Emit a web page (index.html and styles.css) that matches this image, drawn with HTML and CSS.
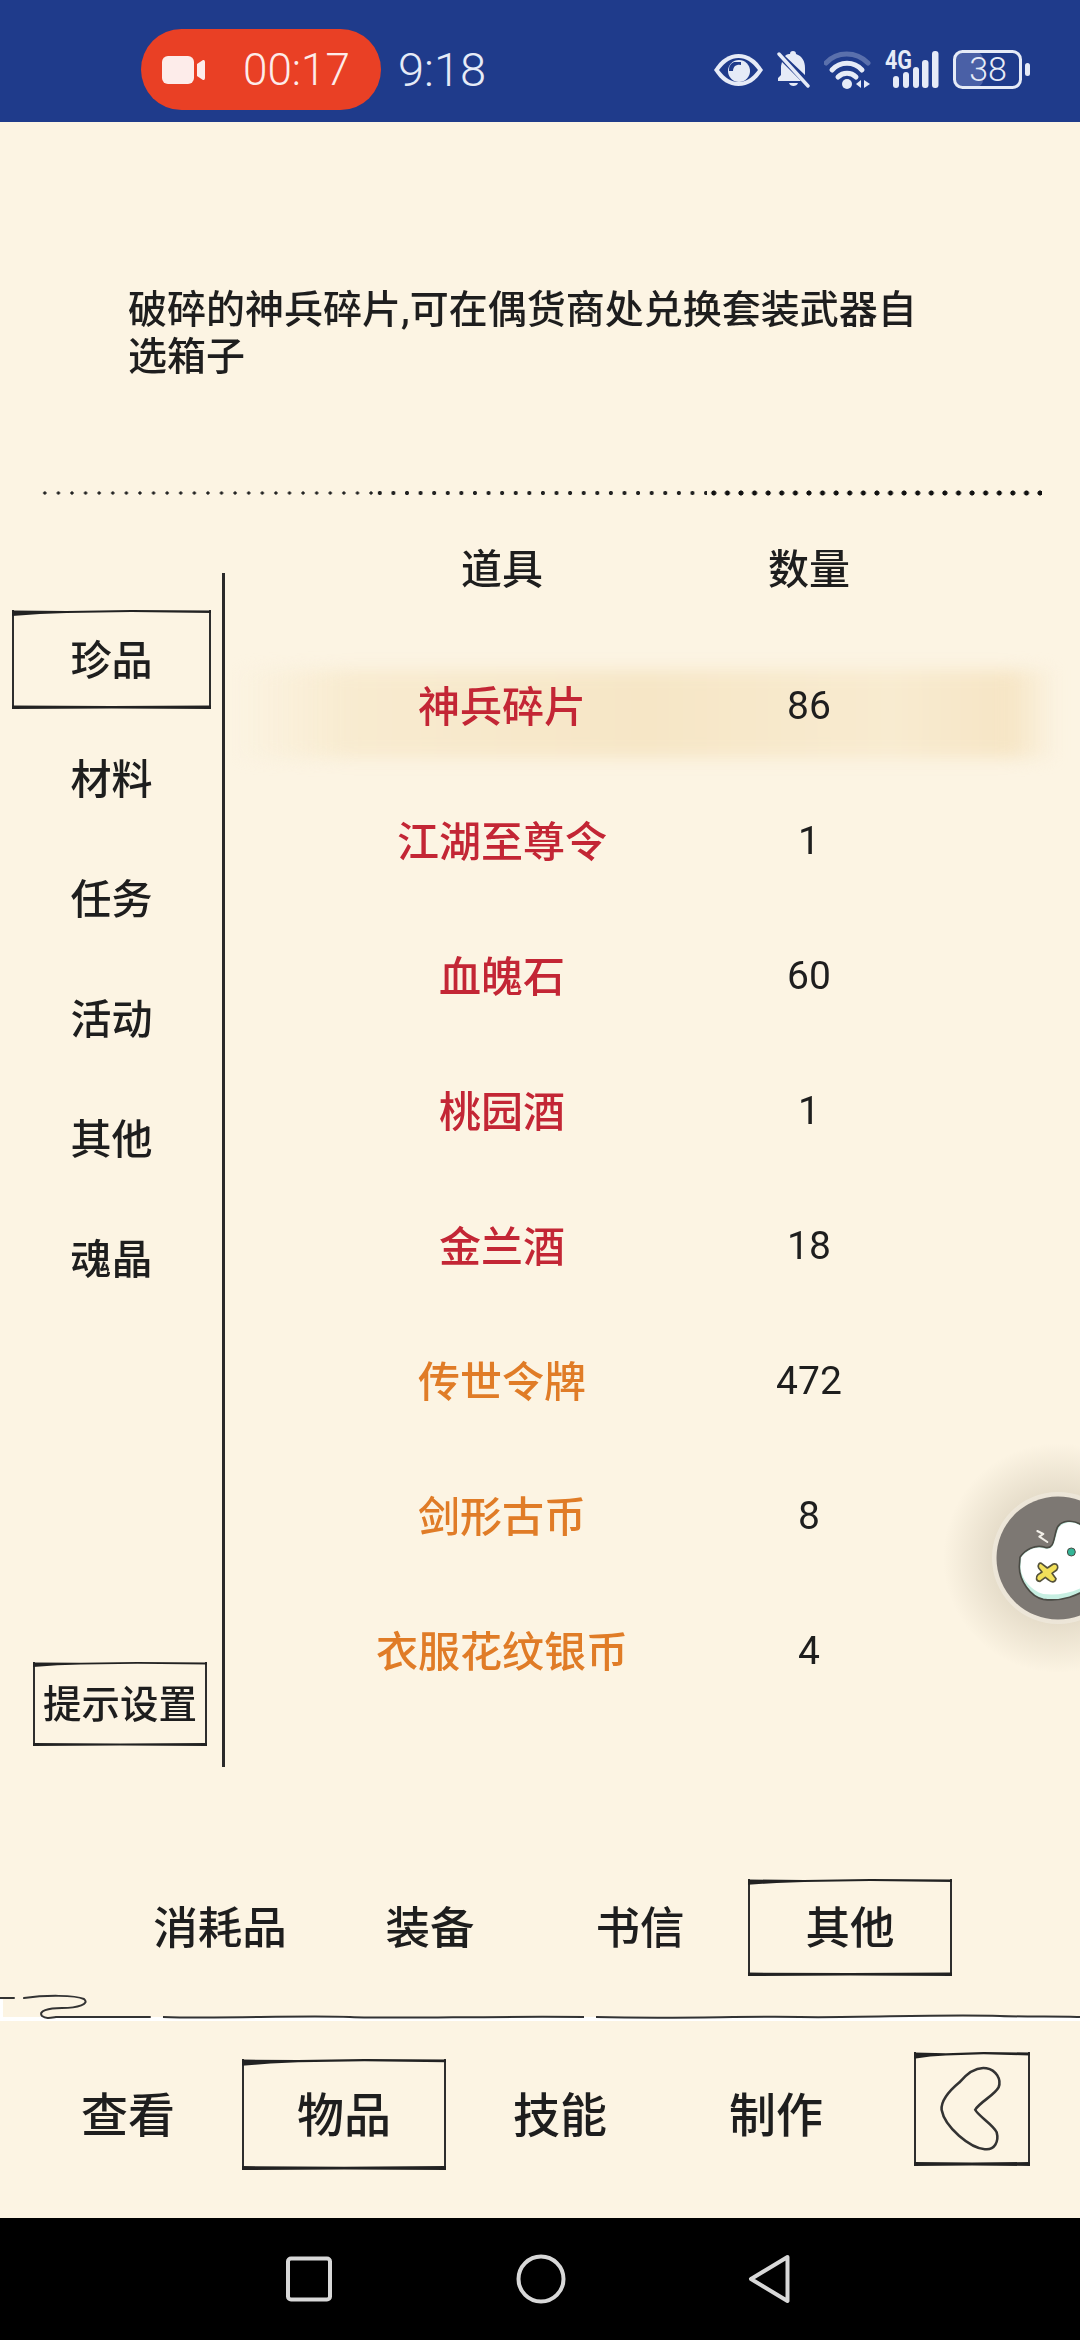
FILE: index.html
```html
<!DOCTYPE html>
<html lang="zh-CN">
<head>
<meta charset="utf-8">
<title>物品</title>
<link rel="stylesheet" href="styles.css">
</head>
<body>
<svg class="defs" width="0" height="0" aria-hidden="true">
  <defs>
    <g id="frame" fill="#222">
      <path d="M0 0.500 L55 1 L120 0 L200 0.500 L200 3 L120 2 L55 3 L28 4 L0 6 Z"/>
      <path d="M0 96.500 L100 97 L200 96.500 L200 100 L100 99.500 L0 100 Z"/>
    </g>
  </defs>
</svg>
<div class="page">
  <header class="status">
    <div class="rec">
      <svg class="rec-cam" viewBox="0 0 43 28"><rect x="0" y="0" width="32" height="28" rx="6"/><path d="M35 8 L41 4 Q43 3.500 43 6 V22 Q43 24.500 41 24 L35 20 Z"/></svg>
      <span class="rec-time">00:17</span>
    </div>
    <span class="clock">9:18</span>
    <div class="status-icons">
      <svg class="ic-eye" viewBox="0 0 49 32">
        <path fill="#e6ebf7" d="M0 16 C7 5 15 0 24.500 0 C34 0 42 5 49 16 C42 27 34 32 24.500 32 C15 32 7 27 0 16Z"/>
        <path fill="#1f3b8b" d="M5 16 C11 8 17 4 24.500 4 C32 4 38 8 44 16 C38 24 32 28 24.500 28 C17 28 11 24 5 16Z"/>
        <circle cx="25" cy="17" r="11" fill="#e6ebf7"/>
        <path fill="#1f3b8b" d="M20 8 H27 V11 A6 6 0 0 0 19 17 H15 A9 9 0 0 1 20 8Z"/>
      </svg>
      <svg class="ic-bell" viewBox="0 0 33 37">
        <path fill="#e6ebf7" d="M16 0 C18 0 19 1 19 3 C25 5 28 10 28 17 L28 24 L8 5 C10 3 12 3 13 3 C13 1 14 0 16 0Z M5 11 L24 30 H1 V27 L4 24 V15 Z M12 32 H21 C20 36 13 36 12 32Z"/>
        <path stroke="#e6ebf7" stroke-width="3.400" stroke-linecap="round" d="M2 3 L31 35"/>
      </svg>
      <svg class="ic-wifi" viewBox="0 0 47 38">
        <g fill="none" stroke="#e6ebf7" stroke-width="5" stroke-linecap="round">
          <path opacity=".3" d="M2 12 C13 0 32 0 44 12"/>
          <path d="M8 19 C16 10 30 10 38 19"/>
          <path d="M14 26 C19 21 27 21 32 26"/>
        </g>
        <circle cx="23" cy="33" r="5" fill="#e6ebf7"/>
        <path fill="#e6ebf7" d="M37 29 V37 L32 33Z M40 29 L46 33 L40 37Z"/>
      </svg>
      <svg class="ic-signal" viewBox="0 -8 54 45">
        <text class="ic-4g" x="0" y="18" textLength="27" lengthAdjust="spacingAndGlyphs">4G</text>
        <g fill="#e6ebf7">
          <rect x="8" y="25" width="6" height="12" rx="3"/>
          <rect x="18" y="21" width="6" height="16" rx="3"/>
          <rect x="28" y="16" width="6" height="21" rx="3"/>
          <rect x="37" y="9" width="6.500" height="28" rx="3"/>
          <rect x="47" y="0" width="6.500" height="37" rx="3"/>
        </g>
      </svg>
      <svg class="ic-batt" viewBox="0 0 77 39">
        <rect x="2" y="2" width="28" height="35" rx="7" fill="#4a60a6"/>
        <rect x="1.500" y="1.500" width="66" height="36" rx="8" fill="none" stroke="#e6ebf7" stroke-width="3"/>
        <text class="ic-batt-num" x="35" y="31" text-anchor="middle">38</text>
        <rect x="72" y="13" width="5" height="13" rx="2.500" fill="#e6ebf7"/>
      </svg>
    </div>
  </header>

  <main class="game">
    <p class="desc">破碎的神兵碎片,可在偶货商处兑换套装武器自选箱子</p>
    <div class="dots"><span class="dots-small"></span><span class="dots-mid"></span><span class="dots-large"></span></div>

    <section class="body">
      <nav class="side">
        <a class="side-item boxed"><svg class="frame" viewBox="0 0 200 100" preserveAspectRatio="none"><use href="#frame"/></svg><span class="lift">珍品</span></a>
        <a class="side-item"><span class="lift">材料</span></a>
        <a class="side-item"><span class="lift">任务</span></a>
        <a class="side-item"><span class="lift">活动</span></a>
        <a class="side-item"><span class="lift">其他</span></a>
        <a class="side-item"><span class="lift">魂晶</span></a>
        <a class="side-setting boxed"><svg class="frame" viewBox="0 0 200 100" preserveAspectRatio="none"><use href="#frame"/></svg><span class="lift">提示设置</span></a>
      </nav>
      <div class="table">
        <div class="row head"><span>道具</span><span>数量</span></div>
        <div class="row item selected"><span class="red">神兵碎片</span><span class="num">86</span></div>
        <div class="row item"><span class="red">江湖至尊令</span><span class="num">1</span></div>
        <div class="row item"><span class="red">血魄石</span><span class="num">60</span></div>
        <div class="row item"><span class="red">桃园酒</span><span class="num">1</span></div>
        <div class="row item"><span class="red">金兰酒</span><span class="num">18</span></div>
        <div class="row item"><span class="orange">传世令牌</span><span class="num">472</span></div>
        <div class="row item"><span class="orange">剑形古币</span><span class="num">8</span></div>
        <div class="row item"><span class="orange">衣服花纹银币</span><span class="num">4</span></div>
      </div>
    </section>

    <div class="subtabs">
      <a class="subtab"><span class="lift">消耗品</span></a>
      <a class="subtab"><span class="lift">装备</span></a>
      <a class="subtab"><span class="lift">书信</span></a>
      <a class="subtab boxed"><svg class="frame" viewBox="0 0 200 100" preserveAspectRatio="none"><use href="#frame"/></svg><span class="lift">其他</span></a>
    </div>

    <svg class="rule" viewBox="0 0 1080 34">
      <rect x="0" y="27" width="1080" height="4" fill="#fff"/>
      <rect x="0" y="8" width="3" height="22" fill="#fff"/>
      <path fill="none" stroke="#333" stroke-width="2" stroke-linecap="round" d="M0 8 H14 M24 8 C45 5 75 5 84 9 C90 14 78 18 62 18 C48 18 38 21 42 26 C46 29 50 28 56 27 H150"/>
      <path fill="none" stroke="#333" stroke-width="2" d="M163 27 C220 29 300 25 350 27 C400 29 480 26 584 27 M596 27 C680 29 740 26 800 27 C860 28 940 24 1000 26 C1030 27 1060 26 1080 27"/>
    </svg>

    <div class="menu">
      <a class="menu-item"><span class="lift">查看</span></a>
      <a class="menu-item boxed"><svg class="frame" viewBox="0 0 200 100" preserveAspectRatio="none"><use href="#frame"/></svg><span class="lift">物品</span></a>
      <a class="menu-item"><span class="lift">技能</span></a>
      <a class="menu-item"><span class="lift">制作</span></a>
      <a class="menu-back boxed">
        <svg class="frame" viewBox="0 0 200 100" preserveAspectRatio="none"><use href="#frame"/></svg>
        <svg class="back-glyph" viewBox="100 60 350 345"><path fill="none" stroke="#333" stroke-width="8" d="M235 150 C260 120 290 100 320 105 C350 110 368 140 358 165 C345 190 300 210 285 235 C295 255 340 280 352 305 C360 335 345 362 315 358 C270 355 190 290 180 235 C178 205 205 175 235 150Z"/></svg>
      </a>
    </div>
  </main>

  <footer class="navbar">
    <svg class="nav-square" viewBox="0 0 46 46"><rect x="2" y="2.500" width="42" height="41" rx="3" fill="none" stroke="#d8d8d8" stroke-width="4"/></svg>
    <svg class="nav-circle" viewBox="0 0 50 50"><circle cx="25" cy="25" r="22.500" fill="none" stroke="#d8d8d8" stroke-width="4"/></svg>
    <svg class="nav-back" viewBox="0 0 43 50"><path d="M39.500 3 L3 25 L39.500 47 Z" fill="none" stroke="#d8d8d8" stroke-width="4" stroke-linejoin="round"/></svg>
  </footer>

  <svg class="float" viewBox="860 1400 220 320">
    <defs>
      <radialGradient id="float-glow" gradientUnits="userSpaceOnUse" cx="1058" cy="1558" r="115">
        <stop offset=".55" stop-color="#8a7d62" stop-opacity=".2"/>
        <stop offset="1" stop-color="#8a7d62" stop-opacity="0"/>
      </radialGradient>
    </defs>
    <rect x="860" y="1400" width="220" height="320" fill="url(#float-glow)"/>
    <circle cx="1058" cy="1558" r="66" fill="#fff" opacity=".28"/>
    <circle cx="1058" cy="1558" r="61.500" fill="#7d7873"/>
    <g transform="translate(960 1470) scale(.33333)">
      <path fill="#c7efe2" stroke="#4a4a44" stroke-width="5" d="M180 262 C195 240 225 222 255 232 C285 240 280 200 292 172 C305 150 340 148 365 165 L400 200 V340 C360 380 300 395 250 388 C210 380 178 330 178 290Z"/>
      <path fill="#fff" d="M184 262 C198 243 225 226 255 236 C287 244 284 200 296 175 C308 154 340 152 362 168 L400 200 V330 C360 365 300 378 250 372 C214 362 182 325 182 290Z"/>
      <path fill="none" stroke="#f2efe8" stroke-width="6" stroke-linecap="round" stroke-linejoin="round" d="M232 183 L250 192 L238 200 L262 216"/>
      <circle cx="334" cy="246" r="12" fill="#34b597" stroke="#4a4a44" stroke-width="3"/>
      <path fill="#f2e05a" stroke="#55523a" stroke-width="5" stroke-linejoin="round" d="M244 280 L262 294 L280 282 C294 280 296 292 290 300 L276 310 L288 326 C286 338 274 338 266 330 L256 322 L240 334 C228 334 226 322 234 314 L246 306 L236 294 C232 284 238 278 244 280Z"/>
    </g>
  </svg>
</div>
</body>
</html>
```

FILE: styles.css
```css
* { box-sizing: border-box; }
html, body { margin: 0; padding: 0; }
body { width: 1080px; height: 2340px; font-family: "Roboto", "Noto Sans CJK SC", sans-serif; color: #1e1e1e; }
.defs { display: block; height: 0; }
.page { position: relative; width: 1080px; height: 2340px; overflow: hidden; display: flex; flex-direction: column; background: #fcf4e3; }

/* status bar */
.status { flex: none; height: 122px; padding: 29px 50px 12px 141px; background: #1f3b8b; display: flex; align-items: center; color: #e6ebf7; }
.rec { width: 240px; height: 81px; border-radius: 41px; background: #e94025; display: flex; align-items: center; padding-left: 21px; color: #fdecea; }
.rec-cam { width: 43px; height: 28px; fill: #fdecea; }
.rec-time { margin-left: 38px; font-size: 44px; font-weight: 300; line-height: 1; }
.clock { margin-left: 17px; font-size: 47px; font-weight: 300; line-height: 1; }
.status-icons { margin-left: auto; display: flex; align-items: center; gap: 14px; }
.ic-eye { width: 49px; height: 32px; }
.ic-bell { width: 33px; height: 37px; }
.ic-wifi { width: 47px; height: 38px; }
.ic-signal { width: 54px; height: 45px; margin-top: -8px; }
.ic-batt { width: 77px; height: 39px; }
.ic-4g { font-size: 25px; font-weight: 700; fill: #e6ebf7; }
.ic-batt-num { font-size: 34px; font-weight: 300; fill: #e6ebf7; }

/* game area */
.game { flex: 1; display: flex; flex-direction: column; filter: blur(.5px); font-weight: 500; }
.desc { flex: none; margin: 0; width: 930px; height: 368px; padding: 165px 0 0 128px; font-size: 39px; line-height: 47px; color: #1e1e1e; }
.dots { flex: none; height: 6px; margin: 0 38px; display: flex; }
.dots span { display: block; flex: 1; background-repeat: repeat-x; background-size: 13.6px 6px; }
.dots-small { background-image: radial-gradient(circle, #222 1.3px, transparent 2px); }
.dots-mid { background-image: radial-gradient(circle, #222 1.7px, transparent 2.4px); }
.dots-large { background-image: radial-gradient(circle, #111 2.2px, transparent 2.9px); }

.lift { position: relative; top: -3px; }

.body { flex: none; height: 1237px; margin-top: 34px; display: flex; align-items: flex-start; }
.side { flex: none; width: 225px; height: 1194px; margin-top: 43px; padding-top: 26px; border-right: 3px solid #2a2a2a; display: flex; flex-direction: column; }
.side-item { height: 120px; width: 199px; margin-left: 12px; display: flex; align-items: center; justify-content: center; font-size: 41px; }
.side-item.boxed { height: 99px; margin-top: 11px; margin-bottom: 10px; }
.side-setting { width: 174px; height: 84px; margin: auto 0 21px 33px; display: flex; align-items: center; justify-content: center; font-size: 38.500px; white-space: nowrap; }

.boxed { position: relative; border-left: 2px solid #2e2e2e; border-right: 2px solid #2e2e2e; }
.frame { position: absolute; left: -2px; top: 0; width: calc(100% + 4px); height: 100%; }

.table { flex: 1; padding-left: 24px; }
.row { display: grid; grid-template-columns: 506px 108px; justify-items: center; align-items: center; }
.row span { white-space: nowrap; }
.head { height: 72px; margin-bottom: 36px; font-size: 41px; }
.item { position: relative; height: 135px; font-size: 42px; }
.item span { position: relative; }
.item span:first-child { top: -2px; }
.item .num { font-size: 39px; font-weight: 400; }
.selected::before { content: ""; position: absolute; left: -18px; right: 22px; top: 32px; bottom: 15px; background: linear-gradient(90deg, rgba(246,230,198,0) 0%, #f8ebd0 14%, #f6e6c6 50%, #f8ebd0 80%, #f6e5c5 94%, rgba(246,230,198,0) 100%); filter: blur(8px); }
.red { color: #c32635; }
.orange { color: #e07c27; }

.subtabs { flex: none; height: 97px; margin-top: 112px; padding-left: 115px; display: flex; }
.subtab { flex: none; width: 210px; display: flex; align-items: center; justify-content: center; font-size: 44.500px; }
.subtab.boxed { width: 204px; margin-left: 3px; }

.rule { flex: none; display: block; width: 1080px; height: 34px; margin-top: 14px; }

.menu { flex: none; margin-top: 28px; padding-left: 20px; display: flex; align-items: flex-start; }
.menu-item { flex: none; width: 216px; height: 111px; margin-top: 7px; display: flex; align-items: center; justify-content: center; font-size: 47px; }
.menu-item.boxed { width: 204px; margin-left: 6px; margin-right: 6px; }
.menu-back { flex: none; width: 116px; height: 114px; margin-left: 30px; display: flex; }
.back-glyph { width: 100%; height: 100%; }

/* system nav */
.navbar { flex: none; height: 122px; background: #000; position: relative; display: flex; align-items: center; padding: 0 0 0 286px; }
.nav-square { width: 46px; height: 46px; }
.nav-circle { width: 50px; height: 50px; margin-left: 184px; }
.nav-back { width: 43px; height: 50px; margin-left: 182px; }

/* floating button */
.float { position: absolute; left: 860px; top: 1400px; width: 220px; height: 320px; }
```
